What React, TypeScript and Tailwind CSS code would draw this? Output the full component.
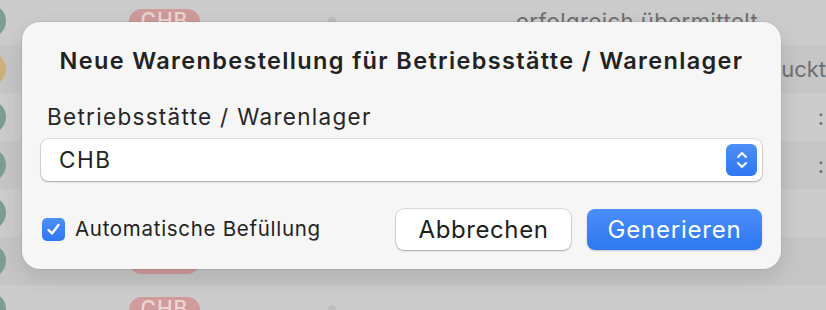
import React from "react";

type Row = { dot: string; status?: string };

const ROWS: Row[] = [
  { dot: "#7f9d97", status: "erfolgreich übermittelt" },
  { dot: "#cdb07a" },
  { dot: "#7f9d97" },
  { dot: "#7f9d97" },
  { dot: "#7f9d97" },
  { dot: "#7f9d97" },
  { dot: "#7f9d97" },
];

function Stepper() {
  return (
    <div className="flex h-[32px] w-[31px] items-center justify-center rounded-[6px] bg-gradient-to-b from-[#4c8ff7] to-[#2f76f2]">
      <svg width="14" height="22" viewBox="0 0 14 22" fill="none">
        <path d="M3 8 L7 4 L11 8" stroke="white" strokeWidth="2" strokeLinecap="round" strokeLinejoin="round" />
        <path d="M3 14 L7 18 L11 14" stroke="white" strokeWidth="2" strokeLinecap="round" strokeLinejoin="round" />
      </svg>
    </div>
  );
}

export default function App() {
  return (
    <div
      className="relative h-[310px] w-[826px] overflow-hidden bg-[#cbcbcb]"
      style={{ fontFamily: "Inter, 'Liberation Sans', sans-serif" }}
    >
      {/* dimmed list behind the sheet */}
      <div className="-mt-[3px] flex flex-col">
        {ROWS.map((r, i) => (
          <div
            key={i}
            className={
              "flex h-[48px] items-center " +
              (i % 2 === 0 ? "bg-[#cccccc]" : "bg-[#c6c6c6]")
            }
          >
            <div
              className="-ml-[28px] h-[34px] w-[34px] shrink-0 rounded-full"
              style={{ background: r.dot }}
            />
            <div className="ml-[123px] flex h-[25px] w-[71px] items-center justify-center rounded-full bg-[#cf9b9b] text-[21px] font-medium tracking-[1px] text-[#ecd6d6]">
              CHB
            </div>
            <div className="ml-[128px] h-[8px] w-[8px] rounded-full bg-[#bdbdbd]" />
            <div className="ml-[180px] whitespace-nowrap text-[22px] tracking-[0.5px] text-[#6f6f6f]">
              {r.status ?? ""}
            </div>
            {i === 1 && (
              <div className="ml-auto whitespace-nowrap text-[22px] text-[#6f6f6f]">
                uckt
              </div>
            )}
            {(i === 2 || i === 3) && (
              <div className="ml-auto pr-[2px] text-[22px] text-[#6f6f6f]">:</div>
            )}
          </div>
        ))}
      </div>

      {/* sheet */}
      <div className="absolute left-[22px] top-[22px] flex h-[247px] w-[759px] flex-col rounded-[18px] bg-[#f6f6f6] px-[19px] shadow-[0_0_0_0.5px_rgba(0,0,0,0.12),0_8px_24px_rgba(0,0,0,0.12)]">
        <div className="mt-[25px] whitespace-nowrap text-center text-[23.5px] font-semibold leading-[28px] tracking-[1.35px] text-[#222222]">
          Neue Warenbestellung für Betriebsstätte / Warenlager
        </div>
        <div className="ml-[6px] mt-[28px] whitespace-nowrap text-[22.5px] leading-[28px] tracking-[1.3px] text-[#262626]">
          Betriebsstätte / Warenlager
        </div>
        <div className="mt-[8px] flex h-[42px] items-center justify-between rounded-[7px] bg-white pl-[18px] pr-[5px] shadow-[0_0_0_0.5px_rgba(0,0,0,0.2),0_1px_2px_rgba(0,0,0,0.25)]">
          <span className="text-[22.5px] tracking-[1.5px] text-[#222222]">CHB</span>
          <Stepper />
        </div>
        <div className="mt-[28px] flex items-center">
          <div className="ml-[1px] flex h-[23px] w-[23px] shrink-0 items-center justify-center rounded-[5px] bg-gradient-to-b from-[#4c8ff7] to-[#2f76f2]">
            <svg width="15" height="15" viewBox="0 0 15 15" fill="none">
              <path d="M2.5 8 L6 11.5 L12.5 3" stroke="white" strokeWidth="2.4" strokeLinecap="round" strokeLinejoin="round" />
            </svg>
          </div>
          <span className="ml-[10px] whitespace-nowrap text-[20.5px] tracking-[0.7px] text-[#222222]">
            Automatische Befüllung
          </span>
          <button className="ml-auto flex h-[41px] w-[175px] items-center justify-center rounded-[8px] bg-white text-[24px] tracking-[0.6px] text-[#1e1e1e] shadow-[0_0_0_0.5px_rgba(0,0,0,0.2),0_1px_2px_rgba(0,0,0,0.25)]">
            Abbrechen
          </button>
          <button className="ml-[16px] flex h-[41px] w-[175px] items-center justify-center rounded-[8px] bg-gradient-to-b from-[#4a8ef7] to-[#2f77f2] text-[24px] tracking-[0.8px] text-white shadow-[0_1px_2px_rgba(0,0,0,0.2)]">
            Generieren
          </button>
        </div>
      </div>
    </div>
  );
}
